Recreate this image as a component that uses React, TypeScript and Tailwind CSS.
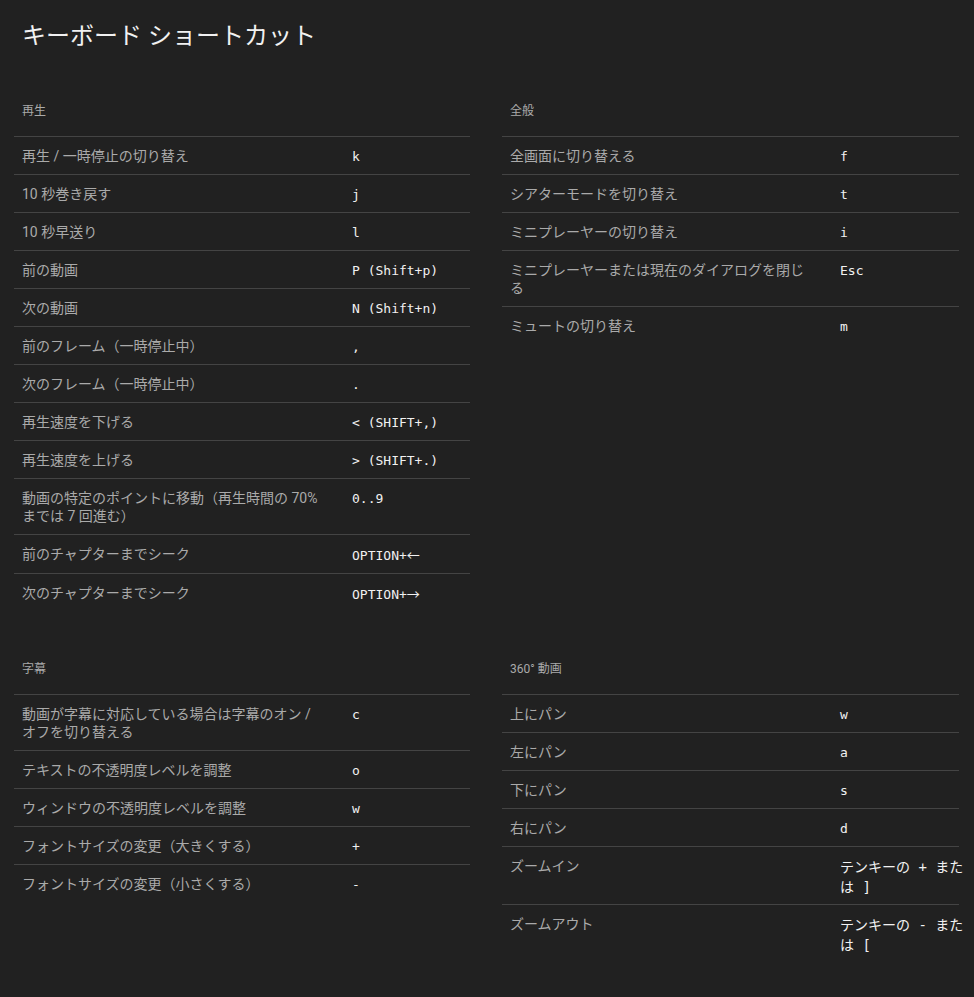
import React from "react";

type Row = { label: string; keys: React.ReactNode; wide?: boolean };
type Section = { title: string; rows: Row[] };

const Arrow = ({ c }: { c: string }) => (
  <span style={{ fontFamily: '"Noto Sans CJK JP", sans-serif' }}>{c}</span>
);

const playback: Section = {
  title: "再生",
  rows: [
    { label: "再生 / 一時停止の切り替え", keys: "k" },
    { label: "10 秒巻き戻す", keys: "j" },
    { label: "10 秒早送り", keys: "l" },
    { label: "前の動画", keys: "P (Shift+p)" },
    { label: "次の動画", keys: "N (Shift+n)" },
    { label: "前のフレーム（一時停止中）", keys: "," },
    { label: "次のフレーム（一時停止中）", keys: "." },
    { label: "再生速度を下げる", keys: "< (SHIFT+,)" },
    { label: "再生速度を上げる", keys: "> (SHIFT+.)" },
    { label: "動画の特定のポイントに移動（再生時間の 70% までは 7 回進む）", keys: "0..9" },
    {
      label: "前のチャプターまでシーク",
      keys: (
        <>
          OPTION+<Arrow c="←" />
        </>
      ),
    },
    {
      label: "次のチャプターまでシーク",
      keys: (
        <>
          OPTION+<Arrow c="→" />
        </>
      ),
    },
  ],
};

const general: Section = {
  title: "全般",
  rows: [
    { label: "全画面に切り替える", keys: "f" },
    { label: "シアターモードを切り替え", keys: "t" },
    { label: "ミニプレーヤーの切り替え", keys: "i" },
    { label: "ミニプレーヤーまたは現在のダイアログを閉じる", keys: "Esc" },
    { label: "ミュートの切り替え", keys: "m" },
  ],
};

const captions: Section = {
  title: "字幕",
  rows: [
    { label: "動画が字幕に対応している場合は字幕のオン / オフを切り替える", keys: "c" },
    { label: "テキストの不透明度レベルを調整", keys: "o" },
    { label: "ウィンドウの不透明度レベルを調整", keys: "w" },
    { label: "フォントサイズの変更（大きくする）", keys: "+" },
    { label: "フォントサイズの変更（小さくする）", keys: "-" },
  ],
};

const spherical: Section = {
  title: "360° 動画",
  rows: [
    { label: "上にパン", keys: "w" },
    { label: "左にパン", keys: "a" },
    { label: "下にパン", keys: "s" },
    { label: "右にパン", keys: "d" },
    { label: "ズームイン", keys: "テンキーの + または ]", wide: true },
    { label: "ズームアウト", keys: "テンキーの - または [", wide: true },
  ],
};

function SectionBlock({ s }: { s: Section }) {
  return (
    <div className="flex flex-col">
      <div className="h-[52px] pt-[19px] text-[12px] leading-[16px] text-[#aaaaaa]">
        <span className="pl-2">{s.title}</span>
      </div>
      {s.rows.map((r, i) => (
        <div key={i} className="flex w-full border-t border-[#444444]">
          <div className="w-[338px] shrink-0 pl-2 pr-[30px] pt-[10px] pb-[9px] text-[14px] leading-[18px] text-[#aaaaaa]">
            {r.label}
          </div>
          <div
            className={
              r.wide
                ? "w-[126px] shrink-0 pt-[10px] pb-[7px] text-[14px] leading-[20px] text-[#f1f1f1]"
                : "w-[118px] shrink-0 pt-[10px] pb-[7px] text-[13px] leading-[20px] text-[#f1f1f1]"
            }
            style={{ fontFamily: '"DejaVu Sans Mono", "Noto Sans CJK JP", monospace' }}
          >
            {r.keys}
          </div>
        </div>
      ))}
    </div>
  );
}

export default function App() {
  return (
    <div
      className="min-h-screen w-full bg-[#212121] px-[14px] pt-5 pb-8"
      style={{ fontFamily: 'Roboto, "Noto Sans CJK JP", sans-serif' }}
    >
      <h1 className="pl-2 text-[24px] leading-[32px] font-normal text-[#f1f1f1]">
        キーボード ショートカット
      </h1>
      <div className="mt-8 grid grid-cols-[456px_457px] gap-x-8 gap-y-[30px]">
        <SectionBlock s={playback} />
        <SectionBlock s={general} />
        <SectionBlock s={captions} />
        <SectionBlock s={spherical} />
      </div>
    </div>
  );
}
